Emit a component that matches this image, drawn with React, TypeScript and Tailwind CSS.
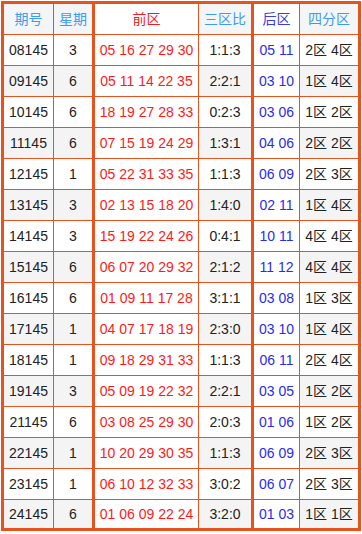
import React from "react";

const rows: [string, string, string, string, string, string][] = [
  ["08145", "3", "05 16 27 29 30", "1:1:3", "05 11", "2区 4区"],
  ["09145", "6", "05 11 14 22 35", "2:2:1", "03 10", "1区 4区"],
  ["10145", "6", "18 19 27 28 33", "0:2:3", "03 06", "1区 2区"],
  ["11145", "6", "07 15 19 24 29", "1:3:1", "04 06", "2区 2区"],
  ["12145", "1", "05 22 31 33 35", "1:1:3", "06 09", "2区 3区"],
  ["13145", "3", "02 13 15 18 20", "1:4:0", "02 11", "1区 4区"],
  ["14145", "3", "15 19 22 24 26", "0:4:1", "10 11", "4区 4区"],
  ["15145", "6", "06 07 20 29 32", "2:1:2", "11 12", "4区 4区"],
  ["16145", "6", "01 09 11 17 28", "3:1:1", "03 08", "1区 3区"],
  ["17145", "1", "04 07 17 18 19", "2:3:0", "03 10", "1区 4区"],
  ["18145", "1", "09 18 29 31 33", "1:1:3", "06 11", "2区 4区"],
  ["19145", "3", "05 09 19 22 32", "2:2:1", "03 05", "1区 2区"],
  ["21145", "6", "03 08 25 29 30", "2:0:3", "01 06", "1区 2区"],
  ["22145", "1", "10 20 29 30 35", "1:1:3", "06 09", "2区 3区"],
  ["23145", "1", "06 10 12 32 33", "3:0:2", "06 07", "2区 3区"],
  ["24145", "6", "01 06 09 22 24", "3:2:0", "01 03", "1区 1区"],
];

const font = {
  fontFamily: '"Liberation Sans", Arial, "Noto Sans CJK SC", sans-serif',
};

export default function App() {
  return (
    <div className="bg-white w-[362px] h-[534px] pt-[1px] pl-[1px]" style={font}>
      <div className="w-[360px] border-[3px] border-[#e6531f] text-[14px]">
        <div className="flex h-[30px] text-center">
          <div className="w-[50px] border-r border-[#e6531f] bg-[#f4f5f7] text-[#3d9cf0] flex items-center justify-center">期号</div>
          <div className="w-[41px] border-r-[3px] border-[#e6531f] bg-[#f4f5f7] text-[#3d9cf0] flex items-center justify-center">星期</div>
          <div className="w-[104px] border-r border-[#e6531f] bg-white text-[#f01c1c] flex items-center justify-center">前区</div>
          <div className="w-[55px] border-r-[3px] border-[#e6531f] bg-[#f4f5f7] text-[#3d9cf0] flex items-center justify-center">三区比</div>
          <div className="w-[46px] border-r border-[#e6531f] bg-white text-[#3a3ae8] flex items-center justify-center">后区</div>
          <div className="w-[58px] bg-[#f4f5f7] text-[#3d9cf0] flex items-center justify-center">四分区</div>
        </div>
        {rows.map((r, i) => {
          const gray = i % 2 === 1;
          const bg = gray ? "bg-[#f4f4f4]" : "bg-white";
          const last = i === rows.length - 1;
          return (
            <div
              key={r[0]}
              className={`flex border-t border-[#e6531f] text-[#222] ${last ? "h-[29px]" : "h-[31px]"}`}
            >
              <div className={`w-[50px] border-r border-[#e6531f] ${bg} flex items-center justify-center`}>{r[0]}</div>
              <div className={`w-[41px] border-r-[3px] border-[#e6531f] ${bg} flex items-center justify-center`}>{r[1]}</div>
              <div className="w-[104px] border-r border-[#e6531f] bg-white text-[#ff1a1a] flex items-center justify-center whitespace-pre">{r[2]}</div>
              <div className={`w-[55px] border-r-[3px] border-[#e6531f] ${bg} flex items-center justify-center`}>{r[3]}</div>
              <div className="w-[46px] border-r border-[#e6531f] bg-white text-[#2b2bf0] flex items-center justify-center whitespace-pre">{r[4]}</div>
              <div className={`w-[58px] ${bg} flex items-center justify-center whitespace-pre`}>{r[5]}</div>
            </div>
          );
        })}
      </div>
    </div>
  );
}
